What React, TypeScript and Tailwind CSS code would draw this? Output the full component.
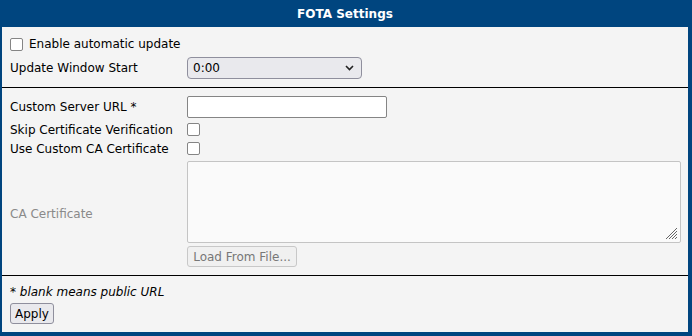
import React from 'react';

const Box: React.FC = () => (
  <span className="inline-block w-[13px] h-[13px] rounded-[2px] border border-[#858585] bg-white shrink-0" />
);

const Row: React.FC<{ label: string; className?: string; labelClass?: string; children?: React.ReactNode }> = ({
  label,
  className = '',
  labelClass = '',
  children,
}) => (
  <div className={`flex items-center ${className}`}>
    <div className={`w-[177px] shrink-0 ${labelClass}`}>{label}</div>
    <div className="flex items-center">{children}</div>
  </div>
);

const App: React.FC = () => {
  return (
    <div className="w-[692px] h-[336px] bg-[#00457f] pl-[2px] pr-[4px] pb-[4px] flex flex-col font-['DejaVu_Sans',sans-serif] text-[12px] text-black leading-none">
      <div className="h-[27px] shrink-0 flex items-center justify-center text-white font-bold">FOTA Settings</div>
      <div className="flex-1 bg-[#f4f4f4] flex flex-col">
        <div className="pt-[7px] pb-[9px] pl-[8px] border-b border-black">
          <div className="h-[20px] flex items-center gap-[6px]">
            <Box />
            <span>Enable automatic update</span>
          </div>
          <Row label="Update Window Start" className="mt-[3px] h-[21px]">
            <div className="w-[175px] h-[22px] rounded-[4px] border border-[#8f8f9d] bg-[#e9e9ed] flex items-center justify-between pl-[5px] pr-[7px]">
              <span>0:00</span>
              <svg width="9" height="6" viewBox="0 0 9 6">
                <path d="M1 1 L4.5 4.5 L8 1" fill="none" stroke="#222" strokeWidth="1.6" />
              </svg>
            </div>
          </Row>
        </div>
        <div className="pt-[8px] pb-[8px] pl-[8px] border-b border-black">
          <Row label="Custom Server URL *" className="h-[21px]">
            <div className="w-[200px] h-[22px] border border-[#858585] rounded-[2px] bg-white" />
          </Row>
          <Row label="Skip Certificate Verification" className="mt-[3px] h-[19px]">
            <Box />
          </Row>
          <Row label="Use Custom CA Certificate" className="h-[19px]">
            <Box />
          </Row>
          <div className="flex items-center mt-[3px]">
            <div className="w-[177px] shrink-0 text-[#8a8a8a]">CA Certificate</div>
            <div className="flex flex-col">
              <div className="relative w-[494px] h-[82px] border border-[#c4c4c4] rounded-[2px] bg-[#fafafa]">
                <svg className="absolute right-[2px] bottom-[2px]" width="13" height="13" viewBox="0 0 13 13">
                  <path d="M12 1 L1 12 M12 4 L4 12 M12 7 L7 12 M12 10 L10 12" stroke="#666" strokeWidth="1" fill="none" />
                </svg>
              </div>
              <div className="mt-[3px] w-[110px] h-[21px] border border-[#c8c8c8] rounded-[3px] bg-[#f0f0f0] text-[#777] flex items-center justify-center">
                Load From File...
              </div>
            </div>
          </div>
        </div>
        <div className="pl-[8px] pt-[8px]">
          <div className="h-[16px] flex items-center italic">* blank means public URL</div>
          <div className="mt-[3px] w-[44px] h-[21px] border border-[#8f8f9d] rounded-[3px] bg-[#e9e9ed] flex items-center justify-center">
            Apply
          </div>
        </div>
      </div>
    </div>
  );
};

export default App;
